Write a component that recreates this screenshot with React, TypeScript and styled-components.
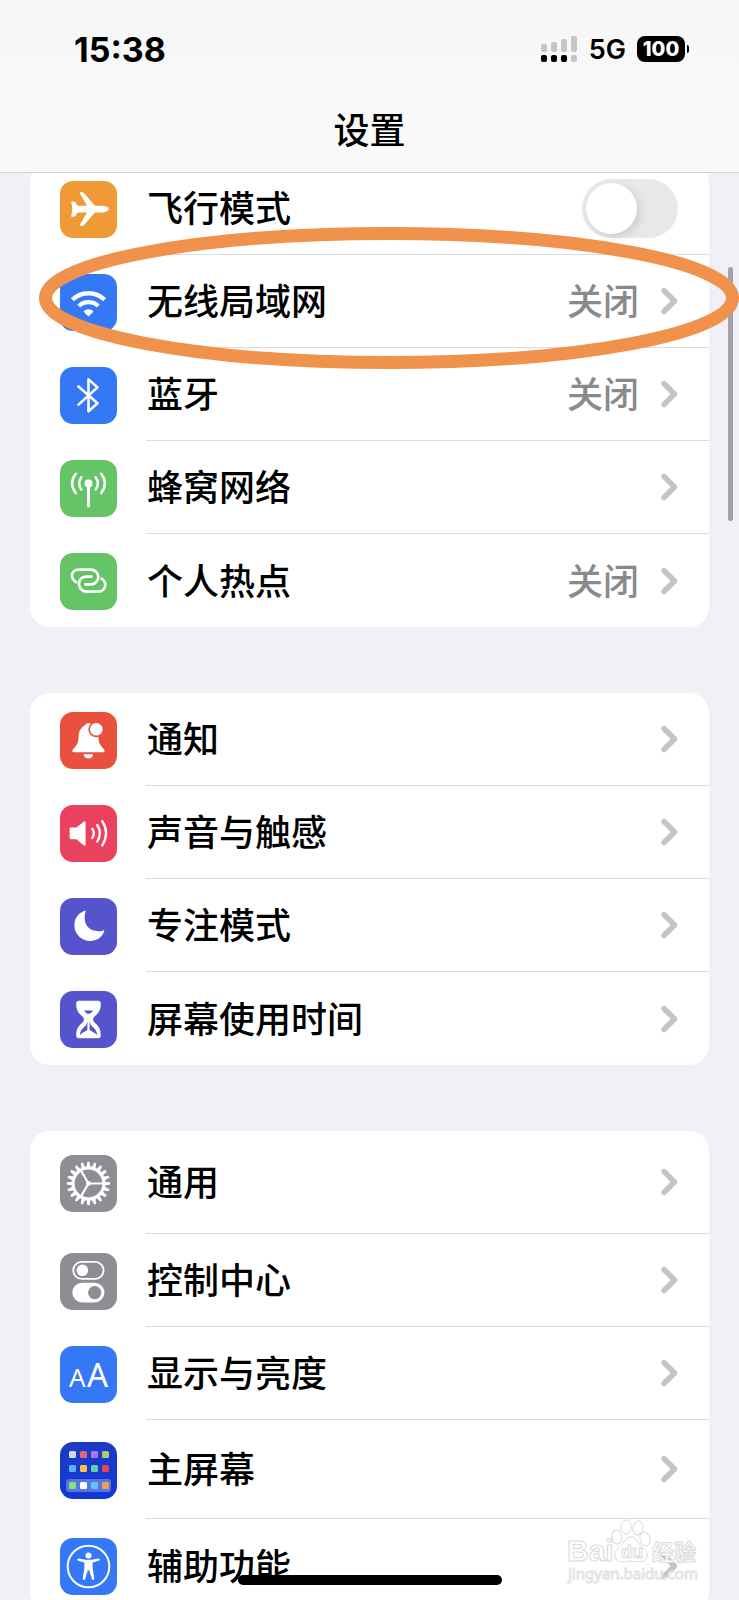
import React from "react";
import styled, { createGlobalStyle, css } from "styled-components";

const cjk = `"Noto Sans CJK SC", "Noto Sans", sans-serif`;

const GlobalStyle = createGlobalStyle`
  * { box-sizing: border-box; }
  body { margin: 0; background: #f1f0f6; font-family: ${cjk}; color: #000; }
`;

const Screen = styled.div`
  position: relative;
  height: 100vh;
  overflow: hidden;
  background: #f1f0f6;
`;

const Header = styled.header`
  position: relative;
  z-index: 2;
  height: 173px;
  background: linear-gradient(#f6f6f6, #f9f9f9 60%);
  border-bottom: 1px solid #d2d2d4;
`;

const StatusBar = styled.div`
  display: flex;
  align-items: center;
  justify-content: space-between;
  height: 98px;
  padding: 0 54px 0 74px;
  font-family: Inter, sans-serif;
`;

const Clock = styled.time`
  padding-top: 1px;
  font-size: 34px;
  font-weight: 700;
  line-height: 40px;
`;

const StatusIcons = styled.div`
  display: flex;
  align-items: center;
`;

const Network = styled.span`
  margin: 0 11px;
  padding-top: 2px;
  font-size: 27px;
  font-weight: 600;
  line-height: 32px;
`;

const Battery = styled.span`
  position: relative;
  width: 48px;
  height: 26px;
  border-radius: 8px;
  background: #000;
  color: #fff;
  font-size: 20px;
  font-weight: 800;
  line-height: 26px;
  text-align: center;
  &::after {
    content: "";
    position: absolute;
    right: -4px;
    top: 9px;
    width: 2px;
    height: 8px;
    border-radius: 0 2px 2px 0;
    background: #000;
  }
`;

const Title = styled.h1`
  margin: 0;
  padding-top: 5px;
  font-size: 36px;
  font-weight: 500;
  line-height: 50px;
  text-align: center;
`;

const Main = styled.main`
  display: flex;
  flex-direction: column;
  gap: 66px;
  margin-top: -11px;
  padding: 0 30px;
`;

const Card = styled.ul`
  margin: 0;
  padding: 0;
  list-style: none;
  border-radius: 20px;
  background: #fff;
`;

const Item = styled.li`
  position: relative;
`;

const rowStyle = css<{ $height?: number }>`
  display: flex;
  align-items: center;
  gap: 29px;
  height: ${(p) => p.$height ?? 93}px;
  padding-left: 30px;
  color: inherit;
  text-decoration: none;
`;

const LinkRow = styled.a<{ $height?: number }>`${rowStyle}`;
const SwitchRow = styled.label<{ $height?: number }>`${rowStyle}`;

const RowBody = styled.span`
  display: flex;
  flex: 1;
  align-self: stretch;
  align-items: center;
  gap: 22px;
  padding: 0 31px 0 1px;
  ${Item}:not(:last-child) & {
    border-bottom: 1px solid #dcdcde;
  }
`;

const Label = styled.span`
  flex: 1;
  padding-bottom: 4px;
  font-size: 36px;
  font-weight: 500;
  line-height: 52px;
`;

const Value = styled.span`
  padding-bottom: 4px;
  font-size: 36px;
  font-weight: 500;
  line-height: 52px;
  color: #8a8a8c;
`;

const Tile = styled.svg<{ $bg: string }>`
  flex: none;
  width: 57px;
  height: 57px;
  margin-top: 2px;
  border-radius: 13px;
  background: ${(p) => p.$bg};
`;

const Switch = styled.input`
  appearance: none;
  position: relative;
  width: 96px;
  height: 59px;
  margin: 0;
  border-radius: 30px;
  background: #e8e8e8;
  &::after {
    content: "";
    position: absolute;
    top: 4px;
    left: 4px;
    width: 51px;
    height: 51px;
    border-radius: 50%;
    background: #fff;
    box-shadow: 3px 3px 8px rgba(0, 0, 0, 0.12);
  }
  &:checked { background: #65c466; }
  &:checked::after { left: 41px; }
`;

const Highlight = styled.svg`
  position: absolute;
  z-index: 1;
  top: -28px;
  left: 9px;
  width: calc(100% + 21px);
  height: 142px;
  pointer-events: none;
`;

const ScrollThumb = styled.div`
  position: absolute;
  top: 267px;
  right: 6px;
  width: 5px;
  height: 254px;
  border-radius: 3px;
  background: #a3a2a8;
`;

const HomeIndicator = styled.div`
  position: absolute;
  bottom: 15px;
  left: 50%;
  width: 264px;
  height: 10px;
  margin-left: -132px;
  border-radius: 5px;
  background: #000;
`;

const Watermark = styled.svg`
  position: absolute;
  right: 34px;
  bottom: 14px;
  width: 140px;
  height: 68px;
`;

const W = "#fff";
const line = {
  fill: "none",
  stroke: W,
  strokeLinecap: "round" as const,
  strokeLinejoin: "round" as const,
};

const blue = "#3478f6";
const green = "#65c466";
const indigo = "#5654cc";
const grey = "#8e8d93";

const homeApps = [
  ["#d5d6e6", "#e8617a", "#b072f8", "#a9cd62"],
  ["#5bb1f8", "#f6c04c", "#62d1ab", "#e04a4c"],
  ["#86e184", "#ffffff", "#62c2ff", "#f0a050"],
];
const appRowTop = [9, 23, 40];

const glyphs: Record<string, React.ReactNode> = {
  airplane: (
    <path
      fill={W}
      d="M11.2 20.5H13.6Q14.6 20.5 15.2 21.3L17.8 24.8H27L20 12.6Q19.6 11.3 21 11.3H22.2Q23.2 11.3 24 12.2L35 24.8H43.5Q48.7 25.4 48.7 28.1Q48.7 30.8 43.5 31.4H35L24 44Q23.2 44.9 22.2 44.9H21Q19.6 44.9 20 43.6L27 31.4H17.8L15.2 35Q14.6 35.8 13.6 35.8H11.2L12.4 28.1Z"
    />
  ),
  wifi: (
    <>
      <g fill="none" stroke={W} strokeWidth="4.4">
        <path d="M12.4 25.8A23 23 0 0 1 44.6 25.8" />
        <path d="M18.8 32A14.2 14.2 0 0 1 38.2 32" />
      </g>
      <path fill={W} d="M28.5 42.6L23.4 37.4A7.3 7.3 0 0 1 33.6 37.4Z" />
    </>
  ),
  bluetooth: (
    <path {...line} strokeWidth="2.6" d="M18.5 19.5L37.5 36.2L28.5 44.2V12.4L37.5 20.4L18.5 37.6" />
  ),
  cellular: (
    <>
      <circle cx="28.5" cy="23.4" r="4" fill={W} />
      <g {...line}>
        <path strokeWidth="3" d="M28.5 24V46" />
        <path strokeWidth="2.5" d="M21.3 17.3Q17 23.4 21.3 29.5M35.7 17.3Q40 23.4 35.7 29.5" />
        <path strokeWidth="2.5" d="M15.8 13.8Q8.4 23.4 15.8 33M41.2 13.8Q48.6 23.4 41.2 33" />
      </g>
    </>
  ),
  hotspot: (
    <g {...line} strokeWidth="2.6">
      <path d="M16 29.2C13.6 27.6 12 25.2 12 22.6C12 19 14.8 16.6 18.6 16.6H30.5C35 16.6 38.3 19.6 38.3 23.8C38.3 28.2 35 31.4 30.5 31.4H25.5" />
      <path d="M31.5 23.6H26C21.8 23.6 19 26.8 19 31C19 35.4 22.4 38.6 26.8 38.6H37.8C42.2 38.6 45.2 35.8 45.2 32C45.2 29 43.8 26.8 41.4 25.6" />
    </g>
  ),
  bell: (
    <>
      <path
        fill={W}
        d="M28.5 11C26.6 11 25.6 12.6 24.2 13.8C20.4 16.4 18.8 19.6 18.6 24.4C18.4 30.4 17.4 32.6 13.6 36.4C11.4 38.8 12.2 40.2 14.6 40.2H42.4C44.8 40.2 45.4 38.8 43.2 36.4C39.6 32.6 38.6 30.4 38.4 24.4L36 13Z"
      />
      <circle cx="36.3" cy="17.3" r="8" fill="#e9503e" />
      <circle cx="36.3" cy="17.3" r="6.3" fill={W} />
      <path fill={W} d="M23.6 42.2H33.2Q32.4 46.6 28.4 46.6T23.6 42.2Z" />
    </>
  ),
  sound: (
    <>
      <path
        fill={W}
        d="M11 22.4H16.4L23.6 16.8Q25.6 15.6 25.6 17.6V39.4Q25.6 41.4 23.6 40.2L16.4 34.2H11Q9.6 34.2 9.6 32.8V23.8Q9.6 22.4 11 22.4Z"
      />
      <g {...line} strokeWidth="2.3">
        <path d="M32.3 23.6Q35.4 28.2 32.3 33" />
        <path d="M37.2 20Q42.6 28.2 37.2 36.6" />
        <path d="M42.2 16.2Q50 28.2 42.2 40.4" />
      </g>
    </>
  ),
  moon: (
    <path
      fill={W}
      d="M24.8 12.8C18.4 15.2 14.4 20.6 14.4 27C14.4 36.2 21.4 43 30.4 43C36.6 43 42 39.4 44.2 33.6C44.6 32.4 44 32 43 32.4C41.6 33 40.2 33.2 38.4 33.2C30 33.2 24.6 27.8 24.6 19.6C24.6 17.4 25 15.6 25.6 13.8C25.9 12.9 25.6 12.5 24.8 12.8Z"
    />
  ),
  hourglass: (
    <>
      <path
        fill={W}
        d="M19 9.8H38Q40.8 9.8 40.8 12.4C40.8 18.6 39 21.4 35 25C32.4 27.4 32.4 29.6 35 32C39 35.6 40.8 38.4 40.8 44.6Q40.8 47.2 38 47.2H19Q16.2 47.2 16.2 44.6C16.2 38.4 18 35.6 22 32C24.6 29.6 24.6 27.4 22 25C18 21.4 16.2 18.6 16.2 12.4Q16.2 9.8 19 9.8Z"
      />
      <path fill={indigo} d="M24 19.6H33.2Q32.6 21 29.6 22.8H27.4Q24.6 21 24 19.6Z" />
      <path
        fill={indigo}
        d="M27 24.4C27.6 25.6 27.4 36 27.4 38.6C26.6 40.6 22.6 41.2 20.8 43.4Q19.8 44 20 42.6C20.6 39 23 37 25 35.2C27.8 32.6 27.8 28.4 27 24.4Z"
      />
      <path
        fill={indigo}
        d="M30 24.4C29.4 25.6 29.6 36 29.6 38.6C30.4 40.6 34.4 41.2 36.2 43.4Q37.2 44 37 42.6C36.4 39 34 37 32 35.2C29.2 32.6 29.2 28.4 30 24.4Z"
      />
    </>
  ),
  gear: (
    <>
      {Array.from({ length: 20 }, (_, i) => (
        <path key={i} fill={W} d="M26.2 14L27.4 6.8H29.6L30.8 14Z" transform={`rotate(${i * 18} 28.5 28.5)`} />
      ))}
      <circle cx="28.5" cy="28.5" r="15.4" fill="none" stroke={W} strokeWidth="3" />
      <path {...line} strokeWidth="2.2" d="M28.5 28.5H43M28.5 28.5L21.2 16M28.5 28.5L21.2 41" />
      <circle cx="28.5" cy="28.5" r="2.4" fill={W} />
    </>
  ),
  controls: (
    <>
      <rect x="13.2" y="8.8" width="30.4" height="17" rx="8.5" fill="none" stroke={W} strokeWidth="1.8" />
      <circle cx="22.4" cy="17.3" r="5.8" fill={W} />
      <rect x="12.3" y="29.8" width="32.2" height="19.6" rx="9.8" fill={W} />
      <circle cx="34.7" cy="39.6" r="6.6" fill={grey} />
    </>
  ),
  display: (
    <g fill={W} fontFamily="'Noto Sans', sans-serif">
      <text x="9" y="41" fontSize="26">A</text>
      <text x="27" y="41" fontSize="33">A</text>
    </g>
  ),
  home: (
    <>
      <rect x="6" y="37" width="45" height="13" rx="3" fill="#fff" opacity="0.3" />
      {homeApps.map((row, r) =>
        row.map((color, c) => (
          <rect key={`${r}-${c}`} x={9 + c * 11} y={appRowTop[r]} width="7" height="7" rx="1.5" fill={color} />
        )),
      )}
    </>
  ),
  accessibility: (
    <>
      <circle cx="28.5" cy="28.5" r="20.8" fill="none" stroke={W} strokeWidth="2" />
      <circle cx="28.5" cy="17.4" r="3" fill={W} />
      <path
        fill={W}
        d="M18.6 20.6L25.4 21.8H31.6L38.4 20.6Q39.8 20.6 39.8 21.6T38.8 22.8L32.6 24.4V29.4L34.2 40.6Q34.2 41.8 33.3 41.9T32 41.2L29.2 32.2H27.8L25 41.2Q24.6 42 23.7 41.9T22.8 40.6L24.4 29.4V24.4L18.2 22.8Q17.2 22.6 17.2 21.6T18.6 20.6Z"
      />
    </>
  ),
};

const Chevron = () => (
  <svg width="17" height="28" viewBox="0 0 17 28" aria-hidden="true">
    <path d="M3 3.5L13.5 14L3 24.5" fill="none" stroke="#c4c4c6" strokeWidth="5.4" strokeLinecap="round" strokeLinejoin="round" />
  </svg>
);

const TileIcon = ({ name, bg }: { name: string; bg: string }) => (
  <Tile $bg={bg} viewBox="0 0 57 57" aria-hidden="true">
    {glyphs[name]}
  </Tile>
);

type Entry = {
  icon: string;
  bg: string;
  label: string;
  value?: string;
  height?: number;
  toggle?: boolean;
  highlighted?: boolean;
};

const groups: Entry[][] = [
  [
    { icon: "airplane", bg: "#f09a37", label: "飞行模式", toggle: true },
    { icon: "wifi", bg: blue, label: "无线局域网", value: "关闭", highlighted: true },
    { icon: "bluetooth", bg: blue, label: "蓝牙", value: "关闭" },
    { icon: "cellular", bg: green, label: "蜂窝网络" },
    { icon: "hotspot", bg: green, label: "个人热点", value: "关闭" },
  ],
  [
    { icon: "bell", bg: "#e9503e", label: "通知" },
    { icon: "sound", bg: "#e9415e", label: "声音与触感" },
    { icon: "moon", bg: indigo, label: "专注模式" },
    { icon: "hourglass", bg: indigo, label: "屏幕使用时间" },
  ],
  [
    { icon: "gear", bg: grey, label: "通用", height: 103 },
    { icon: "controls", bg: grey, label: "控制中心" },
    { icon: "display", bg: blue, label: "显示与亮度" },
    { icon: "home", bg: "linear-gradient(#1c3bc4, #1238d6)", label: "主屏幕", height: 99 },
    { icon: "accessibility", bg: blue, label: "辅助功能" },
  ],
];

const SettingsItem = ({ entry }: { entry: Entry }) => (
  <Item>
    {entry.toggle ? (
      <SwitchRow $height={entry.height}>
        <TileIcon name={entry.icon} bg={entry.bg} />
        <RowBody>
          <Label>{entry.label}</Label>
          <Switch type="checkbox" role="switch" />
        </RowBody>
      </SwitchRow>
    ) : (
      <LinkRow href={`#${entry.icon}`} $height={entry.height}>
        <TileIcon name={entry.icon} bg={entry.bg} />
        <RowBody>
          <Label>{entry.label}</Label>
          {entry.value && <Value>{entry.value}</Value>}
          <Chevron />
        </RowBody>
      </LinkRow>
    )}
    {entry.highlighted && (
      <Highlight viewBox="0 0 700 142" preserveAspectRatio="none" aria-hidden="true">
        <ellipse cx="350" cy="71" rx="343.5" ry="64.5" fill="none" stroke="#f0924c" strokeWidth="13" />
      </Highlight>
    )}
  </Item>
);

const SignalBars = () => (
  <svg width="37" height="26" viewBox="0 0 37 26" aria-hidden="true">
    <g fill="#c6c5c5">
      <rect x="0" y="8" width="6" height="8" rx="2" />
      <rect x="10" y="6" width="6" height="10" rx="2" />
      <rect x="20" y="3" width="6" height="13" rx="2" />
      <rect x="30" y="0" width="6" height="16" rx="2" />
      <rect x="30" y="19" width="6" height="7" rx="2" />
    </g>
    <rect x="0" y="19" width="6" height="7" rx="2" />
    <rect x="10" y="19" width="6" height="7" rx="2" />
    <rect x="20" y="19" width="6" height="7" rx="2" />
  </svg>
);

const BaiduWatermark = () => (
  <Watermark viewBox="0 0 140 68" aria-hidden="true">
    <g fill="#fff" stroke="#dadada" strokeWidth="1">
      <ellipse cx="52" cy="19" rx="5" ry="7" transform="rotate(-8 52 19)" />
      <ellipse cx="61" cy="9" rx="5" ry="7" />
      <ellipse cx="73" cy="10" rx="5" ry="7" transform="rotate(8 73 10)" />
      <ellipse cx="80" cy="21" rx="5" ry="7" transform="rotate(-14 80 21)" />
      <path d="M66 19C60 19 59 26 54 30C50 33 49 36 50 39C52 45 58 44 66 43C74 44 80 45 82 39C83 36 82 33 78 30C73 26 72 19 66 19Z" />
    </g>
    <g fill="#fff" stroke="#dadada" strokeWidth="1" fontFamily="'Liberation Sans', sans-serif" fontWeight="700">
      <text x="2" y="43" fontSize="30">Bai</text>
      <text x="56" y="40" fontSize="18">du</text>
      <text x="87" y="42" fontSize="22" fontFamily={cjk}>经验</text>
    </g>
    <text x="3" y="61" fontSize="15" fontFamily="'Noto Sans', sans-serif" fill="#fff" stroke="#e2e2e2" strokeWidth="1">
      jingyan.baidu.com
    </text>
  </Watermark>
);

export default function App() {
  return (
    <Screen>
      <GlobalStyle />
      <Header>
        <StatusBar>
          <Clock>15:38</Clock>
          <StatusIcons>
            <SignalBars />
            <Network>5G</Network>
            <Battery>100</Battery>
          </StatusIcons>
        </StatusBar>
        <Title>设置</Title>
      </Header>
      <ScrollThumb />
      <Main>
        {groups.map((entries, i) => (
          <Card key={i}>
            {entries.map((entry) => (
              <SettingsItem key={entry.icon} entry={entry} />
            ))}
          </Card>
        ))}
      </Main>
      <BaiduWatermark />
      <HomeIndicator />
    </Screen>
  );
}
